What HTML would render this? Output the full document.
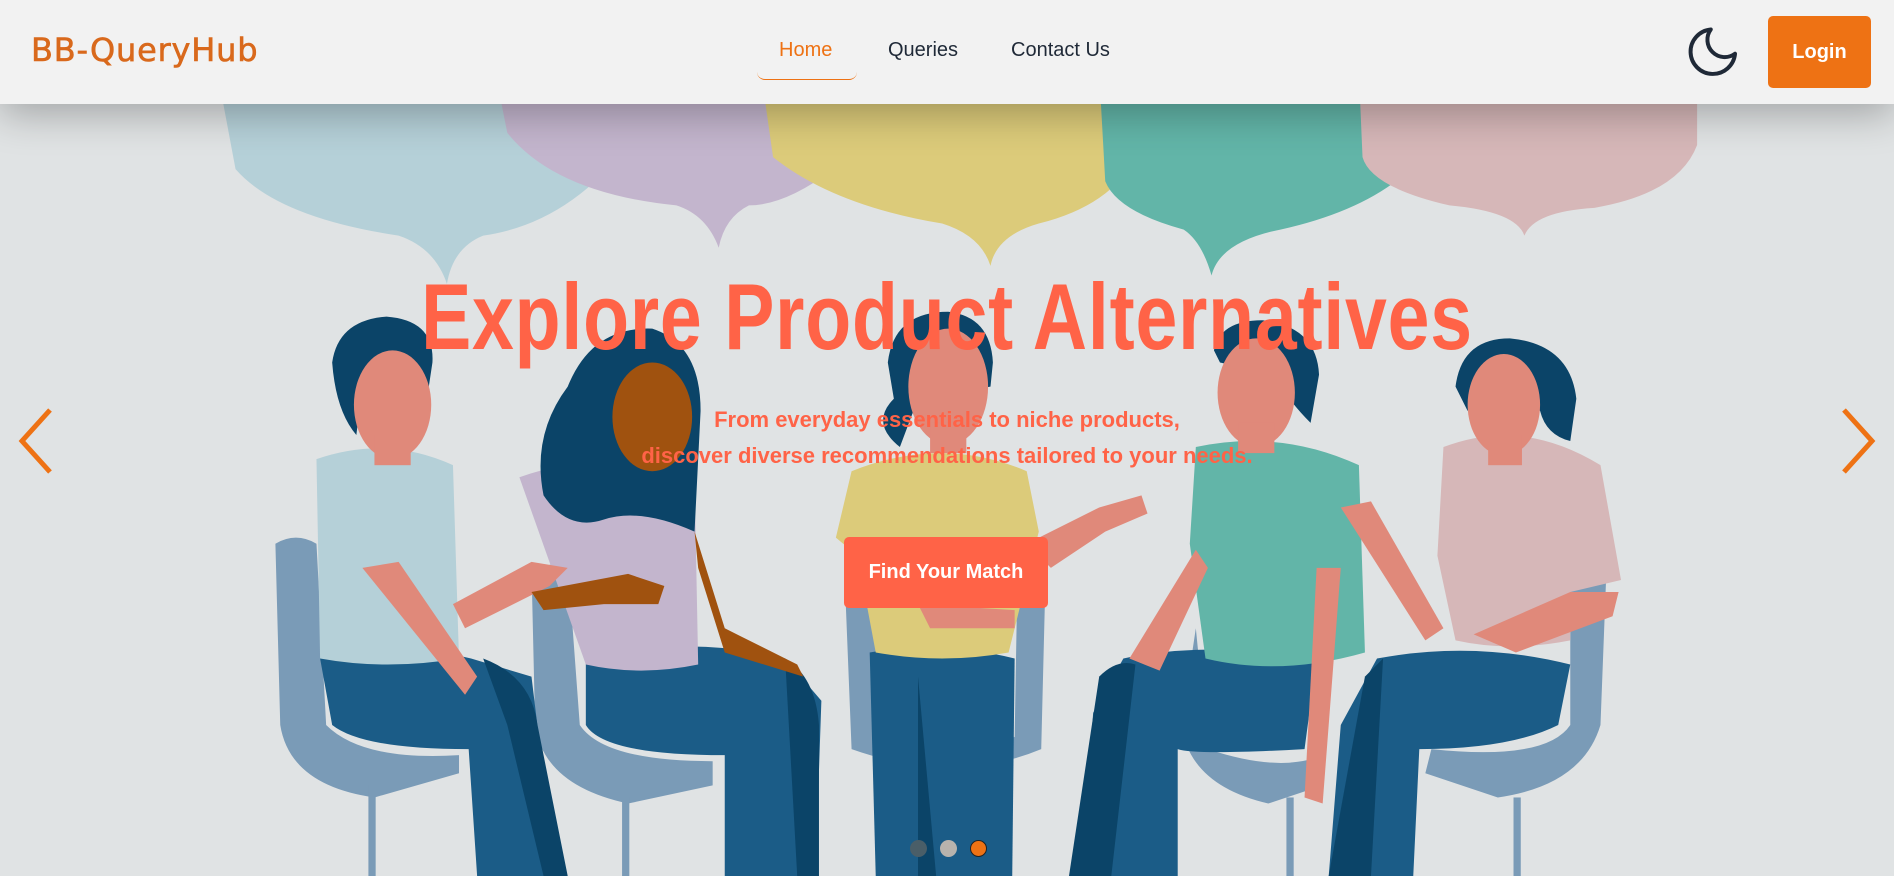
<!DOCTYPE html>
<html><head><meta charset="utf-8">
<style>
*{margin:0;padding:0;box-sizing:border-box}
body{width:1894px;height:876px;overflow:hidden;background:#e0e3e4;font-family:"Liberation Sans",sans-serif;position:relative}
#bg{position:absolute;left:0;top:0;width:1894px;height:876px}
nav{position:absolute;left:0;top:0;width:1894px;height:104px;background:#f2f2f2;box-shadow:0 10px 40px rgba(0,0,0,0.28);z-index:5}
.logo{position:absolute;left:31px;top:31px;font-size:32px;color:#d9691c;letter-spacing:0.8px;font-family:"DejaVu Sans","Liberation Sans",sans-serif;-webkit-text-stroke:0.6px #d9691c}
.nl{position:absolute;top:39px;font-size:20px;color:#1f2937}
.home{left:779px;color:#ee7214}
.ul{position:absolute;left:757px;top:60px;width:100px;height:20px;border-bottom:1.5px solid #ee7214;border-radius:0 0 8px 8px}
.login{position:absolute;left:1768px;top:16px;width:103px;height:72px;background:#ee7214;border-radius:5px;color:#fff;font-weight:bold;font-size:20px;text-align:center;line-height:72px}
h1{position:absolute;left:0;width:1894px;top:262px;text-align:center;color:#ff6347;font-size:94px;font-weight:bold;line-height:110px;transform:scaleX(0.8);letter-spacing:1px;z-index:2}
.sub{position:absolute;left:0;width:1894px;top:402px;text-align:center;color:#ff6347;font-weight:bold;font-size:22px;line-height:36px;z-index:2}
.btn{position:absolute;left:844px;top:537px;width:204px;height:71px;background:#ff6347;border-radius:5px;color:#fff;font-weight:bold;font-size:20px;text-align:center;line-height:71px;z-index:2}
.dot{position:absolute;top:840px;width:17px;height:17px;border-radius:50%;z-index:2}
</style></head><body>
<svg id="bg" viewBox="0 0 1568 725" preserveAspectRatio="none">
<rect width="1568" height="725" fill="#e0e3e4"/>
<path d="M180 60 L520 60 L520 120 Q470 185 400 195 Q375 205 370 235 Q360 205 330 195 Q230 180 195 140 Z" fill="#b5d0d8"/>
<path d="M410 60 L690 60 L690 140 Q650 170 620 170 Q600 180 595 205 Q585 178 560 170 Q460 160 420 110 Z" fill="#c3b5cd"/>
<path d="M630 60 L945 60 L940 130 Q920 170 860 185 Q825 195 820 220 Q812 195 780 185 Q690 170 640 130 Z" fill="#dccb7a"/>
<path d="M910 60 L1185 60 L1185 120 Q1150 170 1060 190 Q1010 200 1003 228 Q995 200 980 190 Q925 175 915 150 Z" fill="#62b5a8"/>
<path d="M1125 60 L1405 60 L1405 120 Q1390 160 1320 172 Q1270 175 1262 195 Q1255 175 1200 170 Q1135 155 1128 130 Z" fill="#d6b7b8"/>
<g fill="#7a9bb7">
<path d="M228 450 Q245 440 262 450 L270 600 Q300 630 380 625 L380 640 L310 660 Q240 650 232 600 Z"/>
<path d="M440 470 L470 465 L480 600 Q500 630 590 630 L590 650 L520 665 Q450 650 443 600 Z"/>
<path d="M700 495 L725 490 L725 610 Q780 625 840 610 L842 495 L865 500 L862 620 Q790 650 705 620 Z"/>
<path d="M990 520 L1000 620 Q1060 640 1095 625 L1095 650 L1050 665 Q985 650 978 600 Z"/>
<path d="M1300 470 L1330 470 L1325 600 Q1310 650 1240 660 L1180 640 L1185 620 Q1280 630 1300 600 Z"/>
<rect x="305" y="650" width="6" height="75"/><rect x="515" y="660" width="6" height="65"/><rect x="780" y="630" width="6" height="95"/><rect x="1065" y="660" width="6" height="65"/><rect x="1253" y="660" width="6" height="65"/>
</g>
<g fill="#1b5c87">
<path d="M265 545 Q330 530 390 545 L440 560 L460 725 L395 725 L388 620 Q300 620 275 600 Z"/>
<path d="M485 545 Q570 525 650 545 L680 580 L675 725 L600 725 L600 625 Q500 625 485 600 Z"/>
<path d="M720 540 Q780 530 840 545 L838 725 L725 725 Z"/>
<path d="M930 545 Q1000 530 1090 545 L1080 620 Q990 625 975 620 L975 725 L895 725 L905 590 Z"/>
<path d="M1140 545 Q1220 530 1300 550 L1290 600 Q1250 620 1175 620 L1170 725 L1100 725 L1110 600 Z"/>
</g>
<g fill="#0b4468"><path d="M400 545 Q440 560 445 600 L470 725 L450 725 L420 600 Z"/><path d="M650 545 Q675 560 678 600 L678 725 L660 725 Z"/><path d="M760 560 L775 725 L760 725 Z"/><path d="M910 560 Q925 545 940 550 L920 725 L885 725 Z"/><path d="M1130 560 L1145 545 L1135 725 L1100 725 Z"/></g>
<path d="M262 380 Q320 360 375 385 L380 545 Q320 555 265 545 Z" fill="#b5d0d8"/>
<path d="M430 395 Q500 370 575 395 L578 550 Q530 560 485 550 Z" fill="#c3b5cd"/>
<path d="M705 390 Q780 360 850 390 L860 440 L835 540 Q780 550 725 540 L710 460 L692 445 Z" fill="#dccb7a"/>
<path d="M990 370 Q1060 355 1125 385 L1130 540 Q1060 560 998 545 L985 450 Z" fill="#62b5a8"/>
<path d="M1195 370 Q1260 345 1325 385 L1342 480 L1300 490 L1300 530 Q1250 540 1205 530 L1190 460 Z" fill="#d6b7b8"/>
<g fill="#e0897a">
<path d="M300 470 L330 465 L395 560 L385 575 Z"/>
<path d="M375 500 L440 465 L470 470 L455 485 L385 520 Z"/>
<path d="M850 450 L910 420 L945 410 L950 425 L915 440 L870 470 Z"/>
<path d="M935 545 L990 455 L1000 470 L960 555 Z"/>
<path d="M1110 420 L1135 415 L1195 520 L1180 530 Z"/>
<path d="M1220 525 L1300 490 L1340 490 L1335 510 L1255 540 Z"/>
<path d="M1090 470 L1110 470 L1095 665 L1080 660 Z"/>
<path d="M760 500 L840 505 L840 520 L770 520 Z"/>
</g>
<path d="M440 490 L520 475 L550 485 L545 500 L500 500 L450 505 Z" fill="#a0520f"/>
<path d="M575 440 L600 520 L660 550 L665 560 L600 540 L578 470 Z" fill="#a0520f"/>
<g fill="#0b4468">
<path d="M275 300 Q280 265 320 262 Q360 265 358 300 L355 320 L300 320 L295 360 Q278 340 275 300 Z"/>
<path d="M450 410 Q440 360 470 320 Q490 270 540 272 Q580 285 580 340 L575 440 Q530 420 500 430 Q470 440 450 410 Z"/>
<path d="M735 300 Q740 258 785 258 Q820 262 822 300 L820 320 L760 330 L745 370 Q720 350 740 330 Z"/>
<path d="M1005 290 Q1010 265 1045 265 Q1090 270 1092 310 L1085 350 Q1065 330 1055 310 L1010 300 Z"/>
<path d="M1205 320 Q1210 280 1250 280 Q1300 285 1305 330 L1300 365 Q1280 360 1275 340 L1245 320 L1215 340 Z"/>
</g>
<g fill="#e0897a">
<ellipse cx="325" cy="335" rx="32" ry="45"/><rect x="310" y="360" width="30" height="25"/>
<ellipse cx="785" cy="320" rx="33" ry="48"/><rect x="770" y="350" width="30" height="25"/>
<ellipse cx="1040" cy="325" rx="32" ry="45"/><rect x="1025" y="350" width="30" height="25"/>
<ellipse cx="1245" cy="335" rx="30" ry="42"/><rect x="1232" y="360" width="28" height="25"/>
</g>
<ellipse cx="540" cy="345" rx="33" ry="45" fill="#a0520f"/>
</svg>
<nav>
<div class="logo">BB-QueryHub</div>
<div class="nl home">Home</div><div class="ul"></div>
<div class="nl" style="left:888px">Queries</div>
<div class="nl" style="left:1011px">Contact Us</div>
<svg style="position:absolute;left:1686px;top:27px" width="56" height="52" viewBox="2 2 21 21"><path d="M21 12.79A9 9 0 1 1 11.21 3 7 7 0 0 0 21 12.79z" fill="none" stroke="#1f2937" stroke-width="1.6" stroke-linejoin="round"/></svg>
<div class="login">Login</div>
</nav>
<h1>Explore Product Alternatives</h1>
<div class="sub">From everyday essentials to niche products,<br>discover diverse recommendations tailored to your needs.</div>
<div class="btn">Find Your Match</div>
<svg style="position:absolute;left:14px;top:406px;z-index:2" width="42" height="70"><path d="M36 4 L8 35 L36 66" fill="none" stroke="#ee7214" stroke-width="5"/></svg>
<svg style="position:absolute;left:1838px;top:406px;z-index:2" width="42" height="70"><path d="M6 4 L34 35 L6 66" fill="none" stroke="#ee7214" stroke-width="5"/></svg>
<div class="dot" style="left:910px;background:#4a5e68"></div>
<div class="dot" style="left:940px;background:#b8b3ad"></div>
<div class="dot" style="left:970px;background:#ee7214;border:1.5px solid #222"></div>
</body></html>
